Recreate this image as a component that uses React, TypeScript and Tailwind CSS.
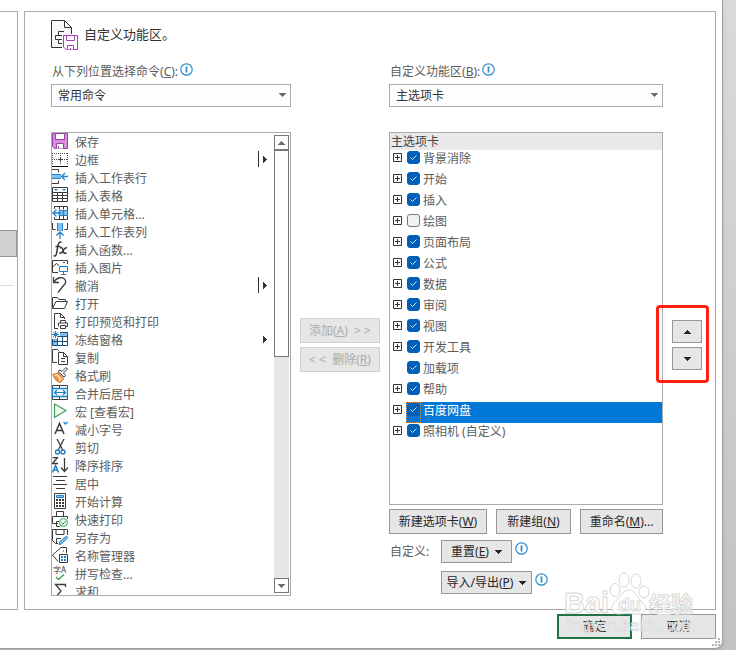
import type { ReactNode } from 'react'
import clsx from 'clsx'

const DARK = '#3b3b3b'
const BLUE = '#1e82c8'
const LIGHT_BLUE = '#83beec'
const GREEN = '#3c9e58'

interface Command {
  name: string
  icon: ReactNode
  menu?: 'split' | 'plain'
}

const commands: Command[] = [
  {
    name: '保存',
    icon: (
      <>
        <path d="M.5.5h15v15h-13l-2-2z" fill="#d590dc" stroke="#9b3fa8" />
        <path d="M3.5.5h9v6h-9zM4.5 15.5v-5h7v5" fill="#fff" stroke="#9b3fa8" />
        <path d="M6.5 13v2" stroke="#9b3fa8" />
      </>
    ),
  },
  {
    name: '边框',
    icon: (
      <>
        <path
          d="M0 2.5h16M.5 2v12M15.5 2v12M8.5 2v12M0 8.5h16"
          stroke="#555"
          strokeDasharray="1 1"
        />
        <path d="M6 8.5h5M8.5 6v5" stroke={DARK} />
        <path d="M0 15.5h16" stroke="#111" />
      </>
    ),
    menu: 'split',
  },
  {
    name: '插入工作表行',
    icon: (
      <>
        <path d="M0 .5h6.5v3M0 14.5h6.5v-3" stroke={DARK} />
        <path d="M0 5h9v5H0z" fill={LIGHT_BLUE} />
        <path d="M0 5.5h9M0 9.5h9" stroke={BLUE} />
        <path d="M16 7.5h-6M13 4L9.500 7.500 13 11" stroke={BLUE} strokeWidth="1.300" />
      </>
    ),
  },
  {
    name: '插入表格',
    icon: (
      <>
        <path
          d="M.5.5h15v14H.5zM.5 5.5h15M.5 8.5h15M.5 11.5h15M5.5 5v9M10.5 5v9"
          stroke={DARK}
        />
        <path d="M2 2h4L4 4zM10 2h4l-2 2z" fill={BLUE} />
      </>
    ),
  },
  {
    name: '插入单元格...',
    icon: (
      <>
        <path d="M2.500 4V1.500h13v13h-13V12M7.500 1.500v3M11.500 1.500v3M7.500 11v4M11.500 11v4" stroke={DARK} />
        <path d="M7 5.500h8.500v5H7z" fill={LIGHT_BLUE} stroke={BLUE} />
        <path d="M11.500 5v6M1 8h8M4.500 4.500L1 8l3.500 3.500" stroke={BLUE} strokeWidth="1.300" />
      </>
    ),
  },
  {
    name: '插入工作表列',
    icon: (
      <>
        <path d="M.5 0v6.500h3M15.500 0v6.500h-3" stroke={DARK} />
        <path d="M5 0h6v8H5z" fill={LIGHT_BLUE} />
        <path d="M5.500 0v8M10.500 0v8" stroke={BLUE} />
        <path d="M8 16V9M4.500 12.500L8 9l3.500 3.500" stroke={BLUE} strokeWidth="1.300" />
      </>
    ),
  },
  {
    name: '插入函数...',
    icon: (
      <>
        <path
          d="M9.500 1.500c-2-1.500-3 .5-3.500 3l-1.500 8c-.5 2.500-1.500 3-3 2M3.500 5.500h5"
          stroke={DARK}
          strokeWidth="1.500"
        />
        <path
          d="M8 7c2-1 2.500 0 3 2.500s1.500 4 3.500 2M15 7c-2-1-3 1.500-4 3s-2 3-3.500 1.500"
          stroke={DARK}
          strokeWidth="1.500"
        />
      </>
    ),
  },
  {
    name: '插入图片',
    icon: (
      <>
        <path d="M15.500 5V1.500H.5v12H6M.5 8l4-3.500 2.500 2M11 3.500h2" stroke={DARK} />
        <path d="M7.500 7.500h8v5h-8zM11.500 13v2M9 15.500h5" fill="#fff" stroke={BLUE} />
      </>
    ),
  },
  {
    name: '撤消',
    icon: (
      <path
        d="M1.500 0v5.500H7M2 5c3-5 9-5.500 11-2.500 1.500 2.500.5 4-1 5.500L6 15.500"
        stroke={DARK}
        strokeWidth="1.300"
      />
    ),
    menu: 'split',
  },
  {
    name: '打开',
    icon: <path d="M.5 13.500v-11h5l1.500 2h6.500V7M.5 13.500L4 6.500h11.500l-3 7z" stroke={DARK} />,
  },
  {
    name: '打印预览和打印',
    icon: (
      <>
        <path d="M6 15.500H2.500V.5h6l4 4V6M8.500.5v4h4" stroke={DARK} />
        <path d="M8.500 10V7.500h5V10M6.500 13.500v-3.500h9v3.500h-2M8.500 12.500h5v3h-5z" stroke={DARK} />
      </>
    ),
  },
  {
    name: '冻结窗格',
    icon: (
      <>
        <path d="M8 1h8v4H8zM0 8h5v7H0z" fill={LIGHT_BLUE} />
        <path d="M8 1.500h7.500v13H.5V8M5.500 7v8M10.500 5v10M6 5.500h10M1 10.500h15" stroke="#174f80" />
        <path d="M3.500 0v7M0 3.500h7M1 1l5 5M6 1L1 6" stroke={BLUE} />
      </>
    ),
    menu: 'plain',
  },
  {
    name: '复制',
    icon: (
      <>
        <path d="M5 13.500H.5V.5h5l2 2" stroke={DARK} />
        <path d="M6.500 3.500h5l4 4v8h-9zM11.500 3.500v4h4M9 9.500h4M9 12.500h4" stroke={DARK} />
      </>
    ),
  },
  {
    name: '格式刷',
    icon: (
      <>
        <path d="M1 7.500L6 6l5.500 5.500L8 15.500C5 14.500 2.500 11.500 1 7.500z" fill="#f9cfa2" stroke="#de7b1d" strokeWidth="1.300" />
        <path d="M3 9.500l2 1 1.500 3" stroke="#de7b1d" strokeWidth="1.300" />
        <path d="M6 4.500L12 10l1.500-1.500-2-2.500 4-4-1.500-1.500-4 4-2-1.500z" fill="#fff" stroke={DARK} />
      </>
    ),
  },
  {
    name: '合并后居中',
    icon: (
      <>
        <path d="M.5 4V.5h15V4M.5 12v2.500h15V12M7.500 1v3M7.500 12v3" stroke={DARK} />
        <path d="M.5 3.500h15v8H.5z" fill="#f2f9fe" stroke={BLUE} strokeWidth="1.300" />
        <path d="M3 7.500h10M5 5L2.500 7.500 5 10M11 5l2.500 2.500L11 10" stroke={BLUE} strokeWidth="1.200" />
      </>
    ),
  },
  {
    name: '宏 [查看宏]',
    icon: <path d="M2.500 1l11.500 6.500-11.500 7z" fill="#f0faf2" stroke={GREEN} strokeWidth="1.200" />,
  },
  {
    name: '减小字号',
    icon: (
      <>
        <path d="M3 13L7.500 2.500 12 13M4.500 9.500h6" stroke={DARK} strokeWidth="1.500" />
        <path d="M11.500 1l2 2 2-2" stroke={BLUE} strokeWidth="1.300" />
      </>
    ),
  },
  {
    name: '剪切',
    icon: (
      <>
        <path d="M5 0l6 11.500M12 0L6 11.500" stroke={DARK} strokeWidth="1.300" />
        <circle cx="5.500" cy="13" r="2" stroke={BLUE} strokeWidth="1.400" />
        <circle cx="11" cy="13" r="2" stroke={BLUE} strokeWidth="1.400" />
      </>
    ),
  },
  {
    name: '降序排序',
    icon: (
      <>
        <path d="M.5.5h5l-5 6H6" stroke={DARK} strokeWidth="1.300" />
        <path d="M.5 15.500l3-7 3 7M1.500 13h4" stroke={BLUE} strokeWidth="1.500" />
        <path d="M12.500 1v13M9 10.500l3.500 4 3.500-4" stroke={DARK} strokeWidth="1.300" />
      </>
    ),
  },
  {
    name: '居中',
    icon: <path d="M1 1.500h14M4 5.500h9M1 9.500h14M4 13.500h9" stroke={DARK} />,
  },
  {
    name: '开始计算',
    icon: (
      <>
        <path d="M2.500.5h11v15h-11z" stroke={DARK} />
        <path d="M4.500 2.500h7v2h-7z" fill={LIGHT_BLUE} stroke={BLUE} />
        <path d="M4 7h8M4 10h8M4 13h8" stroke={DARK} strokeWidth="2" strokeDasharray="2 1" />
      </>
    ),
  },
  {
    name: '快速打印',
    icon: (
      <>
        <path d="M4.500 5V.5h7V5M6 12.500H.5v-7h15V8M4.500 15.500v-5H7M4.500 15.500H8" stroke={DARK} />
        <circle cx="11.500" cy="11.500" r="4" fill="#e6f6e9" stroke={GREEN} />
        <path d="M9.500 11.500l1.500 1.500 3-3" stroke={GREEN} />
      </>
    ),
  },
  {
    name: '另存为',
    icon: (
      <>
        <path d="M15.500 6V.5H.5v11l3 3H6M4 .5v5h8v-5M4.500 14v-4.500H9" stroke={DARK} />
        <path d="M7 15.500l1-3 6.500-5.500 1.500 1.500L9.500 15z" fill={LIGHT_BLUE} stroke={BLUE} />
      </>
    ),
  },
  {
    name: '名称管理器',
    icon: (
      <>
        <path d="M6 14.500L.5 8 9 .5h5.500V6" stroke={DARK} />
        <path d="M11 4h1" stroke={DARK} />
        <path d="M7.500 7.500h8v8h-8z" fill="#fff" stroke={DARK} />
        <path d="M9 10h2M9 13h2M12 10h2M12 13h2" stroke={BLUE} strokeWidth="2" />
      </>
    ),
  },
  {
    name: '拼写检查...',
    icon: (
      <>
        <text x="1" y="8" fontSize="8" fill={DARK}>
          字A
        </text>
        <path d="M4 12l2.500 2.500L12 9.500" stroke={GREEN} strokeWidth="1.300" />
      </>
    ),
  },
  {
    name: '求和',
    icon: <path d="M13.500 4V1.500h-10L9 8l-5.500 6.500h10V12" stroke={DARK} strokeWidth="1.300" />,
  },
]

interface Tab {
  name: string
  checked?: boolean
  leaf?: boolean
  selected?: boolean
}

const tabs: Tab[] = [
  { name: '背景消除', checked: true },
  { name: '开始', checked: true },
  { name: '插入', checked: true },
  { name: '绘图' },
  { name: '页面布局', checked: true },
  { name: '公式', checked: true },
  { name: '数据', checked: true },
  { name: '审阅', checked: true },
  { name: '视图', checked: true },
  { name: '开发工具', checked: true },
  { name: '加载项', checked: true, leaf: true },
  { name: '帮助', checked: true },
  { name: '百度网盘', checked: true, selected: true },
  { name: '照相机 (自定义)', checked: true },
]

function Triangle({ up, className }: { up?: boolean; className?: string }) {
  return (
    <svg viewBox="0 0 7 4" className={clsx('h-1 w-[7px] shrink-0', className)} fill="currentColor">
      <path
        d={
          up
            ? 'M3 0h1v1H3zM2 1h3v1H2zM1 2h5v1H1zM0 3h7v1H0z'
            : 'M0 0h7v1H0zM1 1h5v1H1zM2 2h3v1H2zM3 3h1v1H3z'
        }
      />
    </svg>
  )
}

function Info() {
  return (
    <svg viewBox="0 0 13 13" className="size-[13px] shrink-0" fill="none" stroke="#2f8fd0">
      <circle cx="6.500" cy="6.500" r="5.700" strokeWidth="1.200" />
      <path d="M6.500 3.500v6" strokeWidth="1.800" />
    </svg>
  )
}

interface PickerProps {
  id: string
  label: string
  accessKey: string
  value: string
}

function Picker({ id, label, accessKey, value }: PickerProps) {
  return (
    <div>
      <div className="flex h-[18px] items-center gap-0.5 pl-px">
        <label htmlFor={id} className="pt-0.5 whitespace-nowrap text-[#5c5c5c]">
          {label}(<u>{accessKey}</u>):
        </label>
        <div className="pb-1">
          <Info />
        </div>
      </div>
      <div className="relative mt-1">
        <select
          id={id}
          className="block h-[23px] w-full appearance-none border border-[#ababab] bg-[#fdfdfd] pr-5 pl-1.5 text-[#333]"
        >
          <option>{value}</option>
        </select>
        <Triangle className="pointer-events-none absolute top-[9px] right-[5px] text-[#6d6d6d]" />
      </div>
    </div>
  )
}

interface ButtonProps {
  children: ReactNode
  className?: string
  disabled?: boolean
  label?: string
}

function Button({ children, className, disabled, label }: ButtonProps) {
  return (
    <button
      type="button"
      disabled={disabled}
      aria-label={label}
      className={clsx(
        'flex shrink-0 items-center justify-center border bg-[#e6e6e6] whitespace-nowrap',
        disabled ? 'border-[#d2d2d2] text-[#ababab]' : 'border-[#979797] text-[#262626]',
        className
      )}
    >
      {children}
    </button>
  )
}

function CommandList() {
  return (
    <div className="flex h-116 border border-[#ababab]">
      <ul className="min-w-0 flex-1 overflow-hidden">
        {commands.map(command => (
          <li key={command.name} className="flex h-[18px] gap-[7px] text-[#5c5c5c]">
            <svg viewBox="0 0 16 16" className="size-4 shrink-0" fill="none">
              {command.icon}
            </svg>
            <span className="flex-1 truncate leading-5">{command.name}</span>
            {command.menu && (
              <span className="flex h-4 items-center gap-1 pr-[7px]">
                {command.menu === 'split' && <span className="h-4 w-px bg-[#333]" />}
                <svg viewBox="0 0 4 7" className="h-[7px] w-1" fill="#333">
                  <path d="M0 0h1v7H0zM1 1h1v5H1zM2 2h1v3H2zM3 3h1v1H3z" />
                </svg>
              </span>
            )}
          </li>
        ))}
      </ul>
      <div className="my-0.5 mr-px flex w-[15px] flex-col bg-[#e6e6e6] text-[#6d6d6d]">
        <button
          type="button"
          aria-label="向上滚动"
          className="flex h-[15px] items-center justify-center border border-[#777] bg-white"
        >
          <Triangle up />
        </button>
        <div className="h-[207px] border border-[#777] bg-white" />
        <button
          type="button"
          aria-label="向下滚动"
          className="mt-auto flex h-[15px] items-center justify-center border border-[#777] bg-white"
        >
          <Triangle />
        </button>
      </div>
    </div>
  )
}

function TabTree() {
  return (
    <div className="flex-1 border border-[#ababab]">
      <h2 className="h-[17px] bg-[#e9e9e9] pl-px leading-[17px] text-[#444]">主选项卡</h2>
      <ul>
        {tabs.map(tab => (
          <li
            key={tab.name}
            className="flex h-[21px] items-start gap-1 pl-[3px]"
          >
            {tab.leaf ? (
              <span className="w-[9px]" />
            ) : (
              <button type="button" aria-label={`展开 ${tab.name}`} className="mt-[3px]">
                <svg viewBox="0 0 9 9" className="size-[9px]" fill="#fff" stroke="#333">
                  <path d="M.5.5h8v8h-8zM2 4.500h5M4.500 2v5" />
                </svg>
              </button>
            )}
            <label
              className={clsx(
                'flex h-full flex-1 items-start',
                tab.selected ? 'bg-[#0078d7] text-white' : 'text-[#5c5c5c]'
              )}
            >
              <span
                className={clsx(
                  'grid h-full w-[15px] justify-center border border-dotted',
                  tab.selected ? 'border-[#f0953f]' : 'border-transparent'
                )}
              >
                <input
                  type="checkbox"
                  defaultChecked={tab.checked}
                  className="peer col-start-1 row-start-1 size-[13px] appearance-none rounded-[3px] border border-[#777] bg-[#f3f3f3] checked:border-[#005fb8] checked:bg-[#005fb8]"
                />
                <svg
                  viewBox="0 0 13 13"
                  className="pointer-events-none invisible col-start-1 row-start-1 size-[13px] peer-checked:visible"
                  fill="none"
                  stroke="#d4e7f7"
                >
                  <path d="M3.500 6.500l2 2 4-4" />
                </svg>
              </span>
              <span className="pl-0.5 leading-[18px]">{tab.name}</span>
            </label>
          </li>
        ))}
      </ul>
    </div>
  )
}

function RibbonIcon() {
  return (
    <svg viewBox="0 0 28 30" className="h-[30px] w-7" fill="none" stroke="#333">
      <path d="M11 27.500H.5V.5h13l7 7V14M13.500.5v7h7" fill="#f8f8f8" />
      <path d="M13 11.500H7.500v4H11M7.500 15.500h-3v4h3M11 19.500H7.500v4H11" />
      <path d="M12.500 15.500h14v14H15l-2.500-2.500z" fill="#fff" stroke="#a542b4" />
      <path d="M15.500 15.500h8v5h-8zM16.500 29.500v-4h6v4M19.500 28v2" fill="#fff" stroke="#a542b4" />
    </svg>
  )
}

function Watermark() {
  return (
    <svg
      viewBox="0 0 140 68"
      className="pointer-events-none absolute right-[18px] bottom-2 h-[68px] w-[140px]"
      fill="#fff"
      fillOpacity="0.800"
      stroke="#d8d8d8"
      fontFamily="'Liberation Sans', 'Noto Sans CJK SC', sans-serif"
      aria-hidden="true"
    >
      <ellipse cx="51" cy="18" rx="5" ry="6.500" />
      <ellipse cx="60" cy="8" rx="5" ry="7" />
      <ellipse cx="72" cy="9" rx="5" ry="7" />
      <ellipse cx="80" cy="20" rx="5" ry="6" />
      <path d="M65 18c7 0 8 8 13 12 7 6 3 12-4 12-5 0-13-1-18 0-8 1-11-7-5-12 5-4 7-12 14-12z" />
      <text x="0" y="41" fontSize="29" fontWeight="700">
        Bai
      </text>
      <text x="54" y="39" fontSize="19" fontWeight="700">
        du
      </text>
      <text x="85" y="40" fontSize="22" fontWeight="700">
        经验
      </text>
      <text x="2" y="59" fontSize="16" strokeWidth="0.700">
        jingyan.baidu.com
      </text>
    </svg>
  )
}

function ResizeGrip() {
  return (
    <svg viewBox="0 0 8 8" className="absolute right-0.5 bottom-0.5 size-2" fill="#b5b5b5">
      <path d="M6 0h2v2H6zM3 3h2v2H3zM6 3h2v2H6zM0 6h2v2H0zM3 6h2v2H3zM6 6h2v2H6z" />
    </svg>
  )
}

export default function App() {
  return (
    <div className="min-h-screen bg-linear-to-b from-[#dadada] to-[#c2c2c2] pr-[13px] font-['Noto_Sans','Noto_Sans_CJK_SC',sans-serif] text-xs">
      <div className="relative rounded-br-lg border-r border-b border-[#a0a0a0] bg-white pt-[11px] pb-[9px] shadow-md">
        <div className="flex gap-1.5 pr-1.5">
          <nav className="w-[18px] shrink-0 border-y border-r border-[#ababab]">
            <a
              href="#ribbon"
              aria-label="自定义功能区"
              className="mt-[218px] block h-[27px] w-[17px] border-y border-r border-[#979797] bg-[#d0d0d0]"
            />
            <div className="mt-7 mr-[3px] border-t border-[#ddd]" />
          </nav>

          <main className="min-w-0 flex-1 border border-[#ababab] pt-2 pr-[13px] pb-[13px] pl-[26px]">
            <header className="flex h-[30px] gap-[5px]">
              <RibbonIcon />
              <h1 className="text-[13px] leading-7 text-[#333]">自定义功能区。</h1>
            </header>

            <div className="mt-3 grid grid-cols-[minmax(0,240fr)_80px_minmax(0,274fr)_30px] gap-x-[9px] gap-y-[25px]">
              <Picker id="source" label="从下列位置选择命令" accessKey="C" value="常用命令" />
              <div />
              <Picker id="target" label="自定义功能区" accessKey="B" value="主选项卡" />
              <div />

              <CommandList />

              <div className="flex flex-col gap-1 pt-[186px]">
                <Button disabled className="h-[25px]">
                  添加(<u>A</u>)&nbsp; &gt; &gt;
                </Button>
                <Button disabled className="h-[25px]">
                  &lt; &lt;&nbsp; 删除(<u>R</u>)
                </Button>
              </div>

              <div className="flex flex-col pb-0.5">
                <TabTree />
                <div className="mt-1 flex justify-between">
                  <Button className="h-[25px] w-[98px]">
                    新建选项卡(<u>W</u>)
                  </Button>
                  <Button className="h-[25px] w-[75px]">
                    新建组(<u>N</u>)
                  </Button>
                  <Button className="h-[25px] w-[83px]">
                    重命名(<u>M</u>)...
                  </Button>
                </div>
                <div className="mt-1.5 flex">
                  <span className="w-[52px] pl-px leading-[23px] text-[#5c5c5c]">自定义:</span>
                  <div className="flex flex-col gap-2">
                    <div className="flex gap-[3px]">
                      <Button className="h-[23px] w-[71px] gap-1.5">
                        <span>
                          重置(<u>E</u>)
                        </span>
                        <Triangle />
                      </Button>
                      <div className="pt-0.5">
                        <Info />
                      </div>
                    </div>
                    <div className="flex gap-[3px]">
                      <Button className="h-[23px] w-[91px] gap-1.5">
                        <span>
                          导入/导出(<u>P</u>)
                        </span>
                        <Triangle />
                      </Button>
                      <div className="pt-0.5">
                        <Info />
                      </div>
                    </div>
                  </div>
                </div>
              </div>

              <div className="pt-[188px]">
                <div className="relative flex flex-col gap-1">
                  <Button label="上移" className="h-[23px]">
                    <Triangle up />
                  </Button>
                  <Button label="下移" className="h-[23px]">
                    <Triangle />
                  </Button>
                  <div className="pointer-events-none absolute -top-[15px] -right-[7px] -bottom-[13px] -left-4 rounded border-3 border-[#ff2010]" />
                </div>
              </div>
            </div>
          </main>
        </div>

        <footer className="mt-1 flex justify-end gap-[9px] pr-1.5">
          <button
            type="button"
            className="h-[25px] w-[75px] border-2 border-[#217346] bg-[#e6e6e6] text-[#262626]"
          >
            确定
          </button>
          <Button className="h-[25px] w-[75px]">取消</Button>
        </footer>

        <Watermark />
        <ResizeGrip />
      </div>
    </div>
  )
}
